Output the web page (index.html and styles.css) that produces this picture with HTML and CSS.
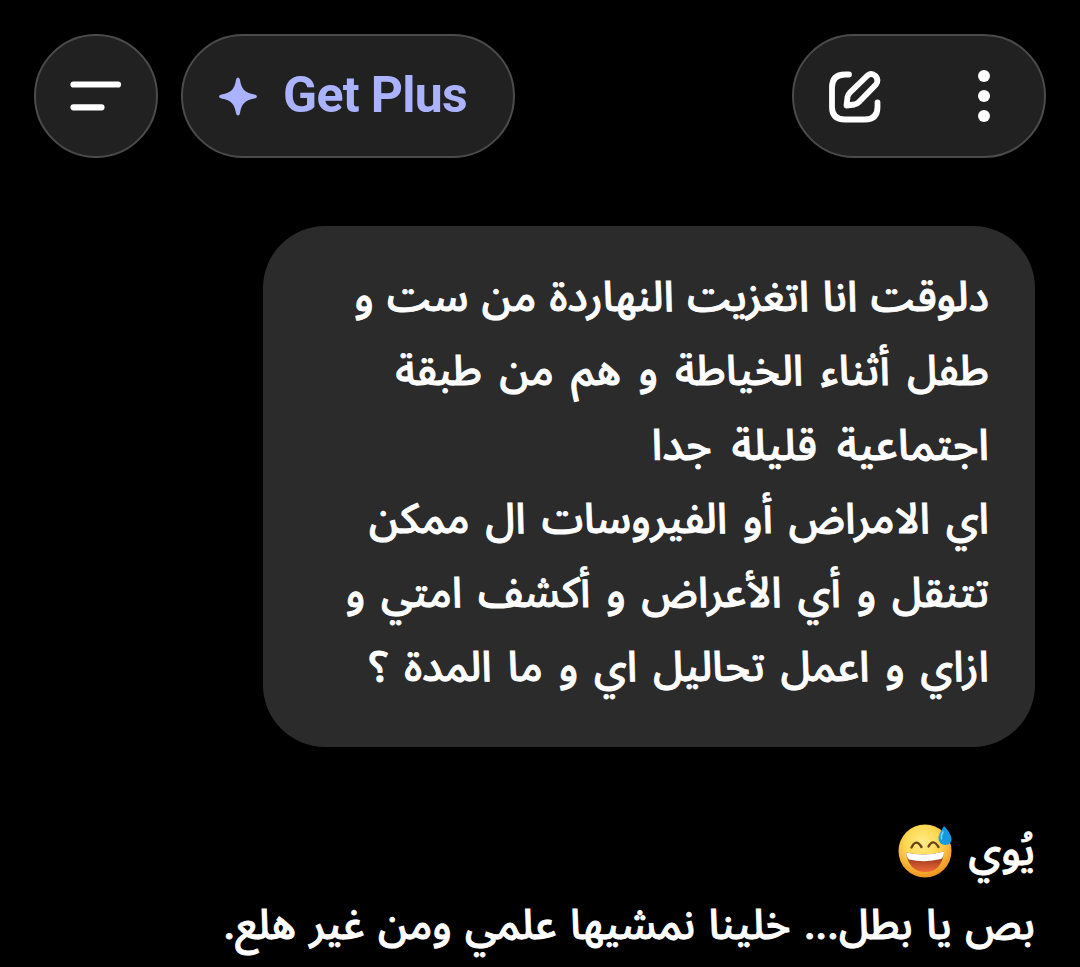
FILE: index.html
```html
<!DOCTYPE html>
<html lang="ar">
<head>
    <meta charset="UTF-8">
    <meta name="viewport" content="width=device-width, initial-scale=1.0">
    <title>Chat</title>
    <link rel="stylesheet" href="styles.css">
</head>
<body>
    <header class="topbar">
        <button class="pill menu" aria-label="Menu">
            <svg width="124" height="124" viewBox="0 0 124 124" fill="none" stroke="#fff" stroke-width="6.2" stroke-linecap="round">
                <path d="M39.5 50.5H84M39.5 73.3H67.5"/>
            </svg>
        </button>
        <button class="pill plus">
            <svg width="40" height="40" viewBox="0 0 40 40" fill="#abb2ff">
                <path d="M20 1.5Q21.600 1.500 22 4C23.500 13 26.500 16.500 36.500 18.500Q39 19 39 20.500Q39 22 36.500 22.500C26.500 24.500 23.500 28 22 37Q21.600 39.500 20 39.500Q18.400 39.500 18 37C16.500 28 13.500 24.500 3.500 22.500Q1 22 1 20.500Q1 19 3.500 18.500C13.500 16.500 16.500 13 18 4Q18.400 1.500 20 1.500Z"/>
            </svg>
            <span>Get Plus</span>
        </button>
        <div class="pill actions">
            <svg width="254" height="124" viewBox="0 0 254 124" fill="none" stroke="#fff" stroke-width="5.8" stroke-linecap="round" stroke-linejoin="round">
                <path d="M57 40.500H53Q40 40.500 40 53.500V73Q40 85.500 53 85.500H73Q85.500 85.500 85.500 73V68.500"/>
                <path d="M54.500 71.500L55.500 63Q56 60.500 58 58.500L75.500 41.500Q79.500 38.500 83.500 42Q87 46 84 50.500L67 68Q65 70 62.500 70.500Z"/>
                <g fill="#fff" stroke="none">
                    <circle cx="192" cy="42" r="6"/>
                    <circle cx="192" cy="62" r="6"/>
                    <circle cx="192" cy="82" r="6"/>
                </g>
            </svg>
        </div>
    </header>
    <main class="chat" dir="rtl">
        <div class="bubble">
            <p class="tight">دلوقت انا اتغزيت النهاردة من ست و</p>
            <p class="loose">طفل أثناء الخياطة و هم من طبقة</p>
            <p class="wide">اجتماعية قليلة جدا</p>
            <p>اي الامراض أو الفيروسات ال ممكن</p>
            <p>تتنقل و أي الأعراض و أكشف امتي و</p>
            <p>ازاي و اعمل تحاليل اي و ما المدة ؟</p>
        </div>
        <div class="reply">
            <p class="greeting">يُوي
                <svg class="emoji" width="54" height="54" viewBox="0 0 54 54" role="img" aria-label="😅">
                    <defs>
                        <radialGradient id="face" cx=".45" cy=".35" r=".65">
                            <stop offset="0" stop-color="#ffec8a"/>
                            <stop offset=".5" stop-color="#ffd850"/>
                            <stop offset="1" stop-color="#ef941f"/>
                        </radialGradient>
                        <linearGradient id="mouth" x2="0" y2="1">
                            <stop offset="0" stop-color="#7a2413"/>
                            <stop offset="1" stop-color="#ef6a38"/>
                        </linearGradient>
                    </defs>
                    <circle cx="27" cy="27" r="26.500" fill="url(#face)"/>
                    <path d="M13.500 23.500Q18 14 23.500 23M30.500 22.500Q35 14 40.500 23" fill="none" stroke="#6b4318" stroke-width="2.400" stroke-linecap="round"/>
                    <path d="M8 28.500Q27 33 46 27.500Q44 48 27 48Q11 48 8 28.500Z" fill="url(#mouth)"/>
                    <path d="M8 28.500Q27 33 46 27.500Q46 33 43 35Q27 39 11 35.500Q8.500 33 8 28.500Z" fill="#fff"/>
                    <path d="M46 2Q52 8 53.500 14Q54 21 47 21Q40 20 40.500 13Q42 8 46 2Z" fill="#1699df"/>
                    <path d="M45 8Q42.500 12 43.500 15" fill="none" stroke="#77cdf7" stroke-width="1.500" stroke-linecap="round"/>
                </svg>
            </p>
            <p class="tight">بص يا بطل... خلينا نمشيها علمي ومن غير هلع.</p>
        </div>
    </main>
</body>
</html>
```
FILE: styles.css
```css
* {
    box-sizing: border-box;
}
body {
    margin: 0;
    height: 967px;
    overflow: hidden;
    background: #000;
    color: #fff;
    font-family: Roboto, "Noto Sans Arabic", "Noto Sans", "DejaVu Sans", sans-serif;
}
.topbar {
    display: flex;
    padding: 34px 34px 0;
}
.pill {
    height: 124px;
    padding: 0;
    border: 2px solid #4b4b4b;
    border-radius: 62px;
    background: #212121;
}
.pill svg {
    display: block;
    flex: none;
}
.menu {
    width: 124px;
}
.menu svg,
.actions svg {
    margin: -2px;
}
.plus {
    display: flex;
    align-items: center;
    gap: 25px;
    width: 334px;
    margin-left: 23px;
    padding-left: 35px;
    color: #abb2ff;
    font: 700 50px Roboto, sans-serif;
    letter-spacing: -0.7px;
}
.plus span {
    margin-top: -3px;
}
.actions {
    width: 254px;
    margin-left: auto;
}
.chat {
    padding: 68px 45px 0;
}
.bubble {
    width: 772px;
    height: 521px;
    padding: 34px 46px;
    border-radius: 62px;
    background: #2b2b2b;
}
p {
    margin: 0;
    height: 74px;
    font-size: 42px;
    font-weight: 500;
    line-height: 74px;
    white-space: nowrap;
    word-spacing: 5.5px;
    -webkit-text-stroke: 0.9px #fff;
}
.tight {
    word-spacing: 2.9px;
}
.loose {
    word-spacing: 7px;
}
.wide {
    font-size: 43px;
    word-spacing: 9.5px;
}
.reply {
    padding-top: 67px;
}
.greeting {
    display: flex;
    align-items: center;
    gap: 17px;
}
```
